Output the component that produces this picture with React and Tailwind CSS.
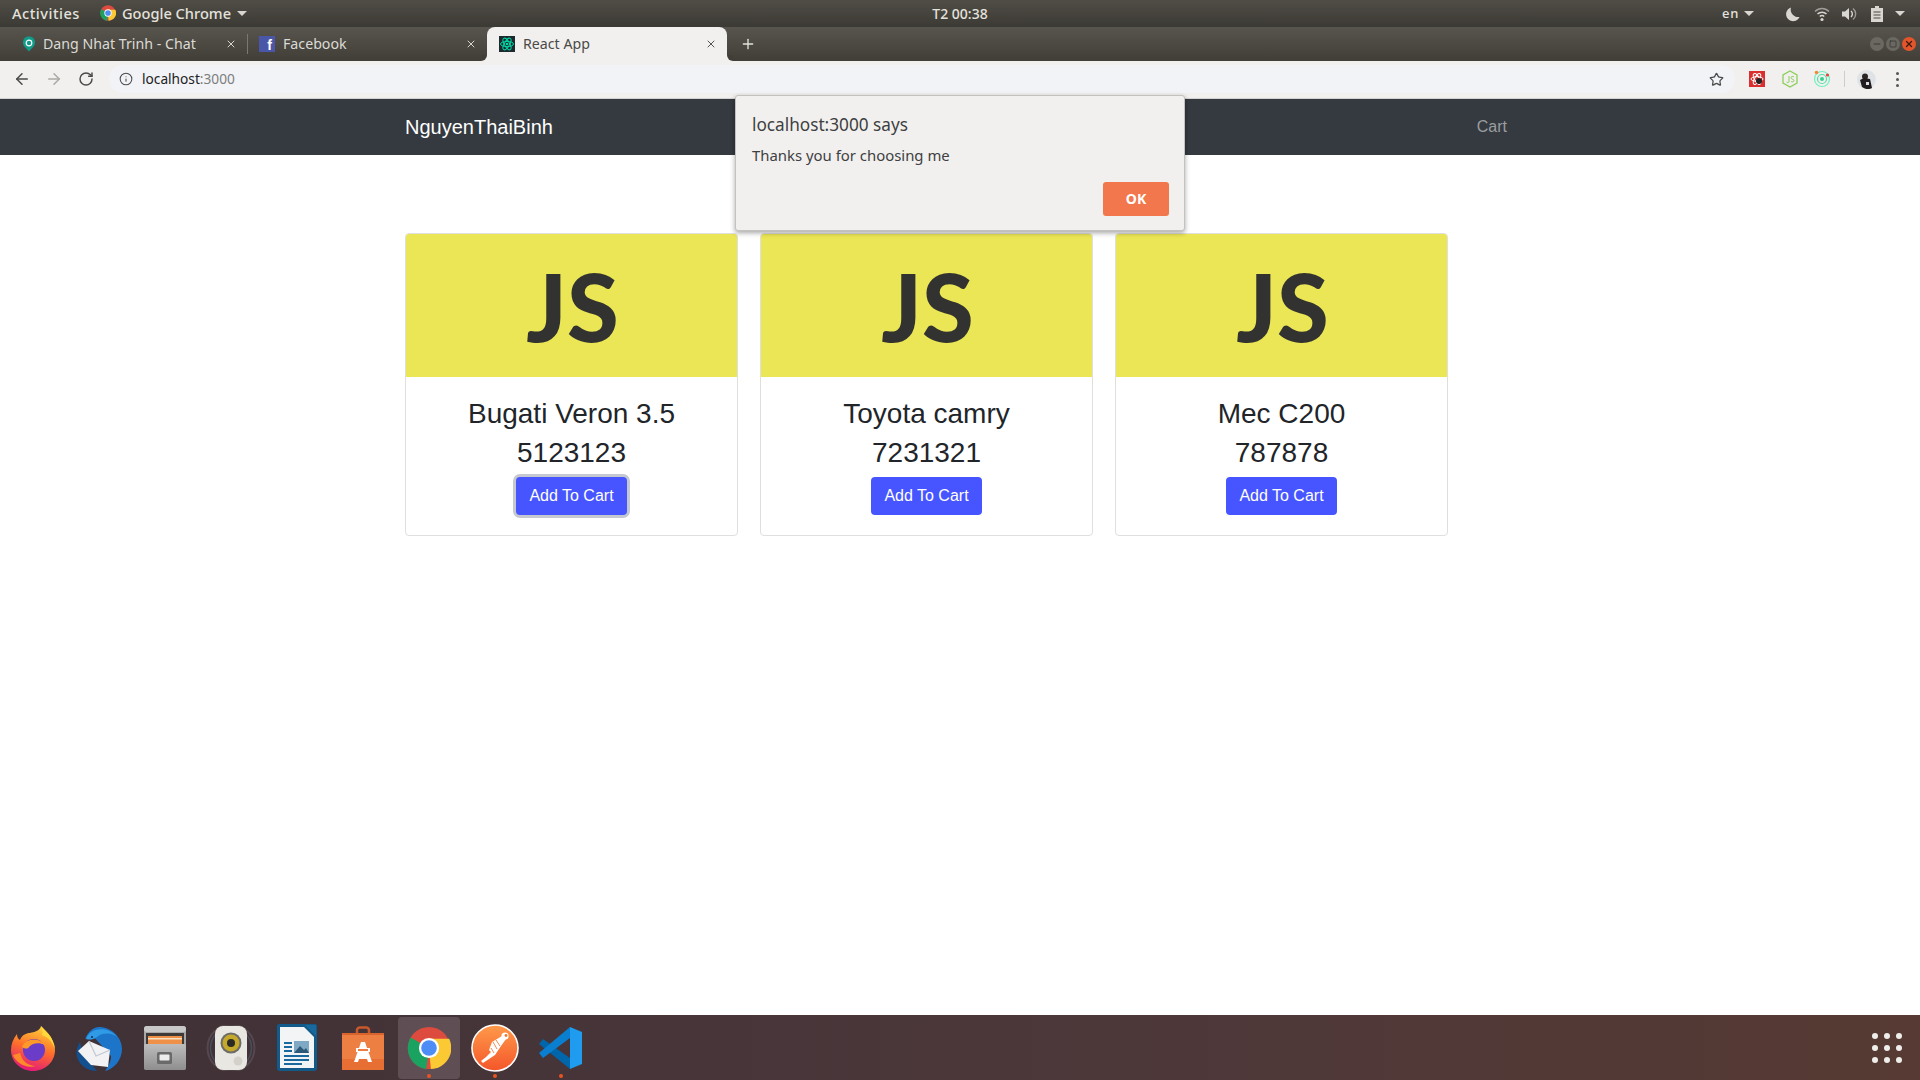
import { ArrowLeft, ArrowRight, RotateCw, Star, Info, X, Plus, Minus, Square } from 'lucide-react';

const products = [
  { name: 'Bugati Veron 3.5', price: '5123123', focused: true },
  { name: 'Toyota camry', price: '7231321' },
  { name: 'Mec C200', price: '787878' },
];

function ChromeIcon({ size = 16 }) {
  return (
    <svg width={size} height={size} viewBox="0 0 48 48">
      <circle cx="24" cy="24" r="23" fill="#dd4b3e" />
      <path d="M24 24 L21 47 A23 23 0 0 1 4 12.5 Z" fill="#1aa260" />
      <path d="M24 14 H46 A23 23 0 0 1 26 47 L24 24 Z" fill="#fbc934" />
      <circle cx="24" cy="24" r="11" fill="#fff" />
      <circle cx="24" cy="24" r="8.5" fill="#4e8df5" />
    </svg>
  );
}

function TopBar() {
  return (
    <div className="h-[27px] shrink-0 flex items-center bg-gradient-to-b from-[#4f4d46] to-[#3c3a34] text-[14.6px] text-[#e4e2dd] font-['Noto_Sans',sans-serif] font-medium">
      <div className="flex-1 flex items-center">
        <span className="ml-[12px] w-[88px] tracking-[0.5px]">Activities</span>
        <ChromeIcon />
        <span className="ml-[6px]">Google Chrome</span>
        <span className="ml-[6px] border-x-[5px] border-x-transparent border-t-[5px] border-t-[#d8d6d0]" />
      </div>
      <span className="text-[14px]">T2 00:38</span>
      <div className="flex-1 flex items-center justify-end">
        <span className="text-[13px] tracking-wider">en</span>
        <span className="ml-[5px] border-x-[5px] border-x-transparent border-t-[5px] border-t-[#d8d6d0]" />
        <svg className="ml-[31px]" width="16" height="16" viewBox="0 0 16 16"><path d="M6 1.5 A7 7 0 1 0 14.5 11 A7.5 7.5 0 0 1 6 1.5Z" fill="#d8d6d0" /></svg>
        <svg className="ml-[13px]" width="16" height="16" viewBox="0 0 16 16" fill="none" stroke="#d8d6d0">
          <path d="M1 5.5 C5 1.5 11 1.5 15 5.5" strokeOpacity=".6" strokeWidth="1.5" />
          <path d="M3.5 8 C6 5.5 10 5.5 12.5 8" strokeWidth="1.5" />
          <path d="M5.8 10.5 C7 9.3 9 9.3 10.2 10.5" strokeWidth="1.5" />
          <circle cx="8" cy="13.5" r="1.6" fill="#d8d6d0" stroke="none" />
        </svg>
        <svg className="ml-[11px]" width="16" height="16" viewBox="0 0 16 16" fill="none" stroke="#d8d6d0">
          <path d="M1 5.5 H4 L8 2 V14 L4 10.5 H1Z" fill="#d8d6d0" stroke="none" />
          <path d="M10 5 A4 4 0 0 1 10 11" strokeWidth="1.4" />
          <path d="M12 2.5 A7 7 0 0 1 12 13.5" strokeWidth="1.4" strokeOpacity=".6" />
        </svg>
        <svg className="ml-[14px]" width="12" height="16" viewBox="0 0 12 16">
          <path d="M4 0 H8 V2 H12 V16 H0 V2 H4Z" fill="#d8d6d0" />
          <path d="M2.5 6 H9.5 M2.5 9 H9.5 M2.5 12 H9.5" stroke="#4a4841" strokeWidth="1.2" />
        </svg>
        <span className="ml-[12px] mr-[15px] border-x-[5px] border-x-transparent border-t-[5px] border-t-[#d8d6d0]" />
      </div>
    </div>
  );
}

function Tab({ icon, title, active, divider }) {
  return (
    <div className={`relative w-[240px] h-[34px] flex items-center pl-[12px] pr-[10px] pb-[1px] text-[14.2px] font-['Noto_Sans',sans-serif] ${active ? 'bg-[#f2f0ee] text-[#4a4a48] rounded-t-[8px]' : 'text-[#dcdad5]'}`}>
      {divider && <span className="absolute left-0 top-[7px] w-px h-[20px] bg-[#7a7870]" />}
      {active && (
        <span className="absolute -left-[6px] bottom-0 w-[6px] h-[6px] bg-[#f2f0ee]">
          <span className="block w-[6px] h-[6px] bg-[#403e37] rounded-br-[6px]" />
        </span>
      )}
      {active && (
        <span className="absolute -right-[6px] bottom-0 w-[6px] h-[6px] bg-[#f2f0ee]">
          <span className="block w-[6px] h-[6px] bg-[#403e37] rounded-bl-[6px]" />
        </span>
      )}
      <span className="w-[16px] h-[16px] flex items-center justify-center shrink-0">{icon}</span>
      <span className="ml-[8px] flex-1 whitespace-nowrap">{title}</span>
      <X size={12} strokeWidth={2} className={active ? 'text-[#55544f]' : 'text-[#d8d6d0]'} />
    </div>
  );
}

function TabStrip() {
  return (
    <div className="h-[34px] shrink-0 flex items-end pl-[7px] bg-gradient-to-b from-[#57554d] to-[#403e37]">
      <Tab
        title="Dang Nhat Trinh - Chat"
        icon={
          <svg className="translate-x-[2px]" width="16" height="16" viewBox="0 0 16 16">
            <path d="M8 0.5 C12 0.5 14 3 14 7 C14 10 11 12 8 15.5 C5 12 2 10 2 7 C2 3 4 0.5 8 0.5Z" fill="#0f9d8a" />
            <circle cx="8" cy="7" r="2.8" fill="none" stroke="#fff" strokeWidth="1.2" />
          </svg>
        }
      />
      <Tab
        title="Facebook"
        divider
        icon={
          <span className="w-[16px] h-[16px] bg-[#4a57a8] text-white font-bold text-[14px] leading-[18px] text-right pr-[3px] font-['Liberation_Sans',sans-serif]">f</span>
        }
      />
      <Tab
        title="React App"
        active
        icon={
          <svg width="16" height="16" viewBox="0 0 16 16">
            <rect width="16" height="16" fill="#1b2a2c" />
            <g fill="none" stroke="#00d8a8" strokeWidth="1">
              <ellipse cx="8" cy="8" rx="6.5" ry="2.6" />
              <ellipse cx="8" cy="8" rx="6.5" ry="2.6" transform="rotate(60 8 8)" />
              <ellipse cx="8" cy="8" rx="6.5" ry="2.6" transform="rotate(120 8 8)" />
            </g>
            <circle cx="8" cy="8" r="1.3" fill="#00d8a8" />
          </svg>
        }
      />
      <div className="self-center ml-[13px] text-[#e4e2dd]"><Plus size={16} strokeWidth={2} /></div>
      <div className="ml-auto mr-[4px] self-center flex gap-[2px]">
        <span className="w-[14px] h-[14px] rounded-full bg-[#6a6860] flex items-center justify-center"><Minus size={10} className="text-[#2f2e2a]" /></span>
        <span className="w-[14px] h-[14px] rounded-full bg-[#6a6860] flex items-center justify-center"><Square size={8} className="text-[#2f2e2a]" /></span>
        <span className="w-[14px] h-[14px] rounded-full bg-[#e2552b] flex items-center justify-center"><X size={10} strokeWidth={3} className="text-[#3a1a10]" /></span>
      </div>
    </div>
  );
}

function Toolbar() {
  return (
    <div className="h-[38px] shrink-0 flex items-center pb-[1px] bg-[#f2f0ee] border-b border-[#d5d3d0] font-['Noto_Sans',sans-serif]">
      <ArrowLeft size={18} strokeWidth={2} className="ml-[13px] text-[#4a4a4a]" />
      <ArrowRight size={18} strokeWidth={2} className="ml-[14px] text-[#aaa9a7]" />
      <RotateCw size={16} strokeWidth={2.2} className="ml-[15px] text-[#4a4a4a]" />
      <div className="ml-[15px] w-[1626px] h-[28px] rounded-full bg-[#f1f3f6] flex items-center text-[13.7px] shrink-0">
        <Info size={14} strokeWidth={1.8} className="ml-[10px] text-[#4a4a4a]" />
        <span className="ml-[9px] text-[#222]">localhost</span>
        <span className="text-[#7d7d7d]">:3000</span>
        <Star size={15} strokeWidth={2} className="ml-auto mr-[11px] text-[#4a4a4a]" />
      </div>
      <svg className="ml-[14px] shrink-0" width="16" height="16" viewBox="0 0 16 16">
        <rect width="16" height="16" fill="#d9302f" />
        <g fill="none" stroke="#fff" strokeWidth="1">
          <ellipse cx="8" cy="8" rx="6" ry="2.4" />
          <ellipse cx="8" cy="8" rx="6" ry="2.4" transform="rotate(60 8 8)" />
          <ellipse cx="8" cy="8" rx="6" ry="2.4" transform="rotate(120 8 8)" />
        </g>
        <circle cx="10" cy="10" r="3" fill="#222" />
      </svg>
      <svg className="ml-[17px] shrink-0" width="16" height="18" viewBox="0 0 16 18">
        <path d="M8 1 L15 5 V13 L8 17 L1 13 V5Z" fill="none" stroke="#8bcf5b" strokeWidth="1.3" />
        <path d="M7 6 V11.5 C7 13 5 13 4.5 12 M12 7 C11 6 9 6.3 9 7.7 C9 9.5 12 8.8 12 10.6 C12 12 10 12.3 9 11.4" fill="none" stroke="#8bcf5b" strokeWidth="1" />
      </svg>
      <svg className="ml-[15px] shrink-0" width="18" height="18" viewBox="0 0 18 18" fill="none">
        <circle cx="9" cy="9" r="7.5" stroke="#6ff0c0" strokeWidth="1.2" />
        <circle cx="9" cy="9" r="4.5" stroke="#4fe0a8" strokeWidth="1.2" />
        <circle cx="9" cy="9" r="2" fill="#35d08f" />
        <circle cx="3.5" cy="2.5" r="1.8" fill="#f08a3c" />
        <circle cx="14.5" cy="5" r="1.6" fill="#e84040" />
      </svg>
      <span className="ml-[13px] w-px h-[16px] bg-[#cfcdca] shrink-0" />
      <svg className="ml-[12px] shrink-0" width="19" height="19" viewBox="0 0 19 19">
        <circle cx="9.5" cy="9.5" r="9.5" fill="#dfe3e6" />
        <circle cx="8" cy="6.5" r="3" fill="#2a2422" />
        <path d="M3 10 L7 8 L13 9 L15 18 A9.5 9.5 0 0 1 5 17Z" fill="#1e1c1e" />
        <rect x="9" y="12" width="3" height="3" fill="#ddd" />
      </svg>
      <span className="ml-[20px] flex flex-col gap-[3px] shrink-0">
        <span className="w-[3px] h-[3px] rounded-full bg-[#555]" />
        <span className="w-[3px] h-[3px] rounded-full bg-[#555]" />
        <span className="w-[3px] h-[3px] rounded-full bg-[#555]" />
      </span>
    </div>
  );
}

function ProductCard({ name, price, focused }) {
  return (
    <div className="w-[333px] h-[303px] border border-[#dfdfdf] rounded-[4px] overflow-hidden flex flex-col items-center">
      <div className="w-full h-[143px] bg-[#ebe655] flex items-center justify-center">
        <span className="font-['Lato',sans-serif] font-black text-[94px] leading-none text-[#323330] pl-[2px]">JS</span>
      </div>
      <div className="mt-[17px] text-[28px] leading-[39px] text-[#212529]">{name}</div>
      <div className="text-[28px] leading-[39px] text-[#212529]">{price}</div>
      <button className={`mt-[5px] w-[111px] h-[38px] rounded-[4px] bg-[#4655ff] text-white text-[16px] ${focused ? 'ring-[3px] ring-[#c5c8d0]' : ''}`}>
        Add To Cart
      </button>
    </div>
  );
}

function AlertDialog() {
  return (
    <div className="absolute left-[735px] top-[95px] w-[450px] h-[136px] bg-[#f2f0ee] border border-[#c4c2bf] rounded-[3px] shadow-[0_2px_5px_rgba(0,0,0,0.35)] flex flex-col pl-[16px] pr-[15px] font-['Noto_Sans',sans-serif] text-[#3d3f42]">
      <div className="mt-[17px] text-[17.2px] leading-[24px]">localhost:3000 says</div>
      <div className="mt-[7px] text-[14.9px] leading-[22px]">Thanks you for choosing me</div>
      <button className="mt-auto mb-[14px] self-end w-[66px] h-[34px] rounded-[3px] bg-[#f3774c] text-white text-[14px] font-bold pb-[2px]">OK</button>
    </div>
  );
}

const dockClass = 'w-[66px] h-[65px] shrink-0 flex items-center justify-center relative';

function DockDot() {
  return <span className="absolute bottom-[2px] left-[31px] w-[4px] h-[4px] rounded-full bg-[#e95420]" />;
}

function Dock() {
  return (
    <div className="h-[65px] shrink-0 flex items-center bg-gradient-to-r from-[#3f3136] via-[#4b373a] via-[52%] to-[#563a33]">
      <div className={dockClass}>
        <svg width="46" height="46" viewBox="0 0 46 46">
          <defs>
            <linearGradient id="ff" x1="0.7" y1="0" x2="0.4" y2="1"><stop offset="0" stopColor="#ffd43a" /><stop offset=".5" stopColor="#ff6f2a" /><stop offset="1" stopColor="#e3187a" /></linearGradient>
          </defs>
          <path d="M31 1 C34 5 44 11 45 25 C45 37 35 46 23 46 C11 46 1 37 1 25 C1 19 3 14 7 9 C7 12 8 14 10 15 C12 10 16 8 20 8 C24 7 30 6 31 1Z" fill="url(#ff)" />
          <path d="M31 1 C34 5 44 11 45 25 C43 17 38 12 32 10 C33 7 32 4 31 1Z" fill="#ffd93b" />
          <circle cx="24" cy="25" r="11" fill="#6a3cc8" />
          <path d="M12 22 C15 14 28 11 35 20 C29 17 22 18 19 22 C18 24 15 24 12 22Z" fill="#ff9a2a" />
          <path d="M3 30 C6 38 16 44 26 41 C18 41 12 36 10 28Z" fill="#ff8a2a" />
        </svg>
      </div>
      <div className={dockClass}>
        <svg width="48" height="48" viewBox="0 0 48 48">
          <path d="M24 3 C36 3 47 13 47 25 C47 36 39 45 30 47 C33 43 36 38 36 32 L18 12 C16 12 12 13 10 15 C13 8 18 3 24 3Z" fill="#1d75c9" />
          <path d="M11 15 C15 3 34 2 42 13 C38 9 28 8 22 13 C18 16 14 16 11 15Z" fill="#2f9ae6" />
          <path d="M5 18 C1 24 0 32 5 39 C9 44 15 47 22 47 L8 30Z" fill="#13508f" />
          <path d="M3 27 L14 17 L35 26 L33 43 L16 41 Z" fill="#f2f2f4" />
          <path d="M14 17 L21 32 L35 26" fill="none" stroke="#c4c8d0" strokeWidth="1.3" />
          <circle cx="17" cy="13" r="1" fill="#102c50" />
        </svg>
      </div>
      <div className={dockClass}>
        <svg width="42" height="44" viewBox="0 0 42 44">
          <defs>
            <linearGradient id="fm" x1="0" y1="0" x2="0" y2="1"><stop offset="0" stopColor="#bdbdbd" /><stop offset="1" stopColor="#8e8e8e" /></linearGradient>
          </defs>
          <rect x="0" y="0" width="42" height="44" rx="3" fill="#a8a8a8" />
          <rect x="0" y="0" width="42" height="6" rx="3" fill="#c8c8c8" />
          <rect x="2" y="7" width="38" height="13" fill="#3d3a38" />
          <rect x="4" y="10" width="34" height="8" fill="#ee9048" />
          <rect x="4" y="12" width="34" height="1.5" fill="#f7e0c0" />
          <rect x="0" y="18" width="42" height="26" rx="2" fill="url(#fm)" />
          <rect x="13" y="26" width="15" height="12" rx="1.5" fill="#6a6a6a" />
          <rect x="15.5" y="28.5" width="10" height="6" rx="1" fill="#ececec" />
        </svg>
      </div>
      <div className={dockClass}>
        <svg width="50" height="46" viewBox="0 0 50 46">
          <circle cx="25" cy="23" r="23.5" fill="none" stroke="#5e5058" strokeWidth="2" opacity=".7" />
          <circle cx="25" cy="23" r="20.5" fill="none" stroke="#4f6a85" strokeWidth="1.5" opacity=".5" />
          <rect x="9" y="1" width="32" height="44" rx="8" fill="#e9e7e2" />
          <circle cx="25" cy="18" r="10.5" fill="#6e6c66" />
          <circle cx="25" cy="18" r="8.5" fill="#c5a92a" />
          <circle cx="25" cy="18" r="4" fill="#2c2a26" />
          <circle cx="32" cy="36" r="4.5" fill="#d4d1cb" />
        </svg>
      </div>
      <div className={dockClass}>
        <svg width="40" height="48" viewBox="0 0 40 48">
          <path d="M2 0 H38 A2 2 0 0 1 40 2 V44 A3 3 0 0 1 37 47 H3 A3 3 0 0 1 0 44 V2 A2 2 0 0 1 2 0Z" fill="#115a8a" />
          <path d="M3 3 H27 L37 13 V44 H3Z" fill="#f2f4f6" />
          <path d="M28 1 H39 V12Z" fill="#18699e" />
          <rect x="7" y="18" width="8" height="2" fill="#18699e" />
          <rect x="7" y="22" width="8" height="2" fill="#18699e" />
          <rect x="7" y="26" width="8" height="2" fill="#18699e" />
          <rect x="17" y="17" width="15" height="12" fill="#7fa8c4" />
          <path d="M17 29 L23 22 L27 26 L29 24 L32 29Z" fill="#2d5a78" />
          <rect x="7" y="31" width="25" height="2" fill="#18699e" />
          <rect x="7" y="35" width="25" height="2" fill="#18699e" />
          <rect x="7" y="39" width="18" height="2" fill="#18699e" />
        </svg>
      </div>
      <div className={dockClass}>
        <svg width="42" height="44" viewBox="0 0 42 44">
          <path d="M15 14 V4 A3 3 0 0 1 18 1.5 H24 A3 3 0 0 1 27 4 V14" fill="none" stroke="#c9582a" strokeWidth="2.5" />
          <path d="M0 7 H42 V44 H0Z" fill="#ee7f42" />
          <path d="M0 7 H42 V9 H0Z" fill="#d9632c" />
          <path d="M0 33 H42 V44 H0Z" fill="#e86f33" />
          <path d="M19 16 H23 L25 22 H28 V26 H26.5 L30 36 H26 L25 33 H17 L16 36 H12 L15.5 26 H14 V22 H17Z" fill="#fff" />
          <rect x="16" y="23" width="10" height="2" fill="#ee7f42" />
        </svg>
      </div>
      <div className={dockClass}>
        <div className="w-[62px] h-[62px] rounded-[4px] bg-[#5f4f55] flex items-center justify-center">
          <ChromeIcon size={44} />
        </div>
        <DockDot />
      </div>
      <div className={dockClass}>
        <svg width="48" height="48" viewBox="0 0 48 48">
          <defs>
            <linearGradient id="pm" x1="0" y1="0" x2="0" y2="1"><stop offset="0" stopColor="#ff9a4a" /><stop offset="1" stopColor="#f4562a" /></linearGradient>
          </defs>
          <circle cx="24" cy="24" r="23" fill="url(#pm)" stroke="#fff" strokeWidth="1.6" />
          <path d="M31 12 L21 18 L18 26 L20 28 L15 33 L10 37 L12 39 L18 35 L24 31 L30 22 L35 15Z" fill="#fff" />
          <path d="M22 18 L26 25 M25 16 L29 22 M20 24 L23 29" stroke="#f47a3a" strokeWidth="0.9" />
          <circle cx="34" cy="12" r="3.6" fill="#fff" />
          <circle cx="35" cy="11.5" r="1.4" fill="#f4762a" />
        </svg>
        <DockDot />
      </div>
      <div className={dockClass}>
        <svg width="44" height="44" viewBox="0 0 44 44">
          <path d="M31 43 L0 18 L4 13 L31 32Z" fill="#0065a9" />
          <path d="M31 1 L0 27 L4 32 L31 12Z" fill="#0a7fcf" />
          <path d="M31 1 L43 6 V38 L31 43Z" fill="#1f9cf0" />
        </svg>
        <DockDot />
      </div>
      <div className="ml-auto mr-[18px] grid grid-cols-3 gap-[6px]">
        {Array.from({ length: 9 }).map((_, i) => (
          <span key={i} className="w-[6px] h-[6px] rounded-full bg-[#f0eeeb]" />
        ))}
      </div>
    </div>
  );
}

export default function App() {
  return (
    <div className="relative w-[1920px] h-[1080px] overflow-hidden flex flex-col bg-white font-['Liberation_Sans',sans-serif]">
      <TopBar />
      <TabStrip />
      <Toolbar />
      <nav className="h-[56px] shrink-0 bg-[#343a40] pl-[405px] pr-[413px] flex items-center justify-between">
        <span className="text-[20px] text-white">NguyenThaiBinh</span>
        <span className="text-[16px] text-[#9b9d9f]">Cart</span>
      </nav>
      <main className="flex-1 pl-[405px] pt-[78px] flex items-start gap-[22px]">
        {products.map((p) => (
          <ProductCard key={p.name} {...p} />
        ))}
      </main>
      <Dock />
      <AlertDialog />
    </div>
  );
}
